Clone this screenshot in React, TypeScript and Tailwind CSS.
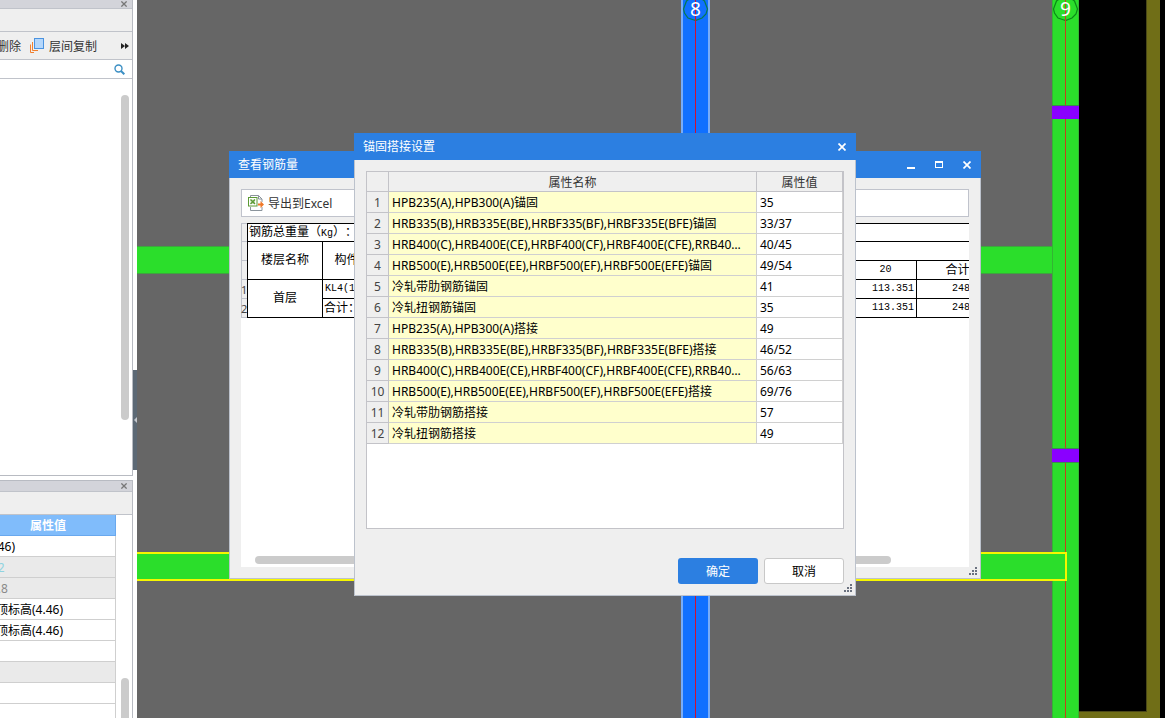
import React from "react";

const ui = "font-['Noto_Sans','Noto_Sans_CJK_SC',sans-serif]";

const anchorage = [
  ["HPB235(A),HPB300(A)锚固", "35"],
  ["HRB335(B),HRB335E(BE),HRBF335(BF),HRBF335E(BFE)锚固", "33/37"],
  ["HRB400(C),HRB400E(CE),HRBF400(CF),HRBF400E(CFE),RRB400(D)锚固", "40/45"],
  ["HRB500(E),HRB500E(EE),HRBF500(EF),HRBF500E(EFE)锚固", "49/54"],
  ["冷轧带肋钢筋锚固", "41"],
  ["冷轧扭钢筋锚固", "35"],
  ["HPB235(A),HPB300(A)搭接", "49"],
  ["HRB335(B),HRB335E(BE),HRBF335(BF),HRBF335E(BFE)搭接", "46/52"],
  ["HRB400(C),HRB400E(CE),HRBF400(CF),HRBF400E(CFE),RRB400(D)搭接", "56/63"],
  ["HRB500(E),HRB500E(EE),HRBF500(EF),HRBF500E(EFE)搭接", "69/76"],
  ["冷轧带肋钢筋搭接", "57"],
  ["冷轧扭钢筋搭接", "49"],
];

const properties = [
  { value: "(4.46)", cls: "bg-white text-black" },
  { value: "222", cls: "bg-[#eaeaea] text-[#8fd3e0]" },
  { value: "22.8", cls: "bg-[#eaeaea] text-[#8a8a8a]" },
  { value: "层顶标高(4.46)", cls: "bg-white text-black" },
  { value: "层顶标高(4.46)", cls: "bg-white text-black" },
  { value: "", cls: "bg-white" },
  { value: "", cls: "bg-[#eaeaea]" },
  { value: "", cls: "bg-white" },
  { value: "", cls: "bg-white" },
];

function Cross({ className }: { className: string }) {
  return (
    <svg className={className} viewBox="0 0 8 8" fill="none" stroke="currentColor" strokeWidth="1.7" aria-hidden="true">
      <path d="M0.5 0.5 7.5 7.5M7.5 0.5 0.5 7.5" />
    </svg>
  );
}

function Grip() {
  return (
    <svg className="absolute right-[3px] bottom-[3px] size-2" viewBox="0 0 8 8" fill="#6b7280" shapeRendering="crispEdges" aria-hidden="true">
      <path d="M6 0h2v2h-2zM3 3h2v2h-2zM6 3h2v2h-2zM0 6h2v2h-2zM3 6h2v2h-2zM6 6h2v2h-2z" />
    </svg>
  );
}

function PanelStrip() {
  return (
    <div className="flex h-full items-center justify-end bg-[#d3d4da] pr-[5px]">
      <button type="button" aria-label="关闭面板" className="text-[#777]">
        <Cross className="block size-[6px]" />
      </button>
    </div>
  );
}

function SidePanels() {
  return (
    <aside className="flex h-full w-[133px] shrink-0 flex-col overflow-hidden bg-white">
      <section className="flex h-[476px] shrink-0 flex-col border-r border-b border-[#b8bbc2] bg-white">
        <div className="h-[9px] border-b border-[#c0c3ca]"><PanelStrip /></div>
        <div className="h-[23px] border-b border-[#c0c3ca] bg-[#efefef]" />
        <div className="flex h-[28px] items-center border-b border-[#c0c3ca] bg-[#efefef] text-[#333]">
          <button type="button" className="-ml-[3px] shrink-0 pt-[2px] whitespace-nowrap">删除</button>
          <button type="button" className="ml-[9px] flex shrink-0 items-center gap-[5px] whitespace-nowrap">
            <svg className="h-[16px] w-[14px] shrink-0" viewBox="0 0 14 16" fill="none" aria-hidden="true">
              <path d="M.5 6.500V14.500H4" stroke="#f08030" />
              <path d="M2.500 4V12.500H8" stroke="#f08030" />
              <rect x="4.500" y=".5" width="9" height="10" fill="#b5d7fb" stroke="#4b93e0" />
            </svg>
            <span className="pt-[2px]">层间复制</span>
          </button>
          <button type="button" aria-label="更多" className="mr-[3px] ml-auto">
            <svg className="h-[6px] w-[8px]" viewBox="0 0 8 6" fill="#222" aria-hidden="true">
              <path d="M0 0 4 3 0 6ZM4 0 8 3 4 6Z" />
            </svg>
          </button>
        </div>
        <label className="flex h-[19px] items-center border-b border-[#c0c3ca] bg-white pr-[7px]">
          <input type="text" aria-label="搜索构件" className="min-w-0 flex-1 outline-none" />
          <svg className="size-[11px]" viewBox="0 0 11 11" fill="none" stroke="#3b8fc4" aria-hidden="true">
            <circle cx="4.5" cy="4.5" r="3.5" strokeWidth="1.4" />
            <path d="M7 7 10.3 10.3" strokeWidth="2" />
          </svg>
        </label>
        <div className="flex flex-1 justify-end pt-4 pr-[3px]">
          <div className="h-[325px] w-2 rounded-full bg-[#cbcbcb]" />
        </div>
      </section>
      <section className="mt-1 flex flex-1 flex-col border-t border-r border-[#b8bbc2]">
        <div className="h-[11px] shrink-0 border-b border-[#c0c3ca]"><PanelStrip /></div>
        <div className="h-[23px] shrink-0 border-b border-[#c0c3ca] bg-[#efefef]" />
        <div className="flex flex-1">
          <table className="-ml-[19px] w-[135px] table-fixed border-separate border-spacing-0 self-start">
            <thead>
              <tr>
                <th className="h-[21px] border-r border-b border-[#69a8ee] bg-[#80bcfb] px-0 pt-[2px] pb-0 font-bold text-white">属性值</th>
              </tr>
            </thead>
            <tbody>
              {properties.map((p, i) => (
                <tr key={i}>
                  <td className={`h-[21px] border-r border-b border-[#cfcfcf] pt-[2px] pr-0 pb-0 pl-[3px] whitespace-nowrap ${p.cls}`}>{p.value}</td>
                </tr>
              ))}
            </tbody>
          </table>
          <div className="mt-[163px] ml-[5px] w-2 rounded-t-full bg-[#cbcbcb]" />
        </div>
      </section>
    </aside>
  );
}

function Drawing() {
  return (
    <svg className="absolute inset-0 h-full w-full" shapeRendering="crispEdges" role="img" aria-label="结构平面图">
      <rect width="100%" height="100%" fill="#666666" />
      <rect x="942" y="0" width="100%" height="100%" fill="#000000" />
      <rect x="1009" y="0" width="14" height="100%" fill="#706e17" />
      <rect x="942" y="711" width="81" height="7" fill="#706e17" />
      <path d="M942 711.5h67.500V0" fill="none" stroke="#4a4818" />
      <rect x="0" y="247" width="915" height="27" fill="#2bde2b" />
      <path d="M0 246.500h915M0 273.500h915" stroke="#3fa53f" />
      <rect x="544" y="0" width="29" height="100%" fill="#79adf8" />
      <rect x="546" y="0" width="25" height="100%" fill="#1070ff" />
      <rect x="915" y="0" width="27" height="100%" fill="#2bde2b" />
      <path d="M915.500 0V718M941.500 0V718" stroke="#33b433" />
      <rect x="-2" y="553" width="931" height="27" fill="#2bde2b" stroke="#f6f600" strokeWidth="2" />
      <g shapeRendering="auto" strokeWidth="1.200">
        <path d="M558.500 20.500 551 18 547.500 13 546.500 9 549.500 1 555 -3H562L567.500 1 570.500 9 569 14 565 18Z" fill="#1070ff" stroke="#087a50" />
        <path d="M928.500 20.500 921 18 917.500 13 916.500 9 919.500 1 925 -3H932L937.500 1 940.500 9 939 14 935 18Z" fill="#2bde2b" stroke="#0b8a18" />
      </g>
      <rect x="558" y="0" width="1" height="100%" fill="#d01030" />
      <rect x="928" y="0" width="1" height="100%" fill="#c8401c" />
      <rect x="915" y="105" width="27" height="14" fill="#8a00ff" />
      <rect x="915" y="449" width="27" height="13" fill="#8a00ff" />
      <path d="M915 105.500h27M915 448.500h27M915 462.500h27" stroke="#3c8a50" />
      <path d="M929 552v29" stroke="#f6f600" strokeWidth="2" />
      <g fill="#ffffff" fontSize="19" textAnchor="middle" className="font-['Noto_Sans',sans-serif]">
        <text x="558.500" y="16">8</text>
        <text x="928.500" y="16">9</text>
      </g>
    </svg>
  );
}

const cell = "border border-black p-0";
const num = "font-['Liberation_Mono',monospace] text-[10px]";

function RebarWindow() {
  return (
    <section aria-label="查看钢筋量" className="absolute top-[151px] left-[92px] flex h-[428px] w-[752px] flex-col border border-t-0 border-[#bcc2cc] bg-[#efefef]">
      <header className="-mx-px flex h-[27px] shrink-0 items-center bg-[#2c7fe1] pr-[10px] pl-[9px] text-white">
        <h2>查看钢筋量</h2>
        <div className="ml-auto flex items-center gap-5">
          <button type="button" aria-label="最小化" className="flex h-2 w-2 items-end">
            <span className="h-[2px] w-2 bg-white" />
          </button>
          <button type="button" aria-label="最大化" className="h-[7px] w-2 border border-t-2 border-white" />
          <button type="button" aria-label="关闭"><Cross className="block size-2" /></button>
        </div>
      </header>
      <div className="flex flex-1 flex-col px-[11px] pt-[11px] pb-[11px]">
        <div className="flex h-[28px] shrink-0 items-center border border-[#c0c3cc] bg-white pl-[6px]">
          <button type="button" className="flex items-center gap-1 text-[#333]">
            <svg className="size-4" viewBox="0 0 16 16" fill="none" aria-hidden="true">
              <path d="M2.500 2V.5h8L14 4v3M14 12v3.500H2.500V12" stroke="#8b949c" />
              <path d="M10.500 .5V4H14" stroke="#8b949c" />
              <rect x=".5" y="2.500" width="8.500" height="8.500" fill="#fff" stroke="#5c9a35" />
              <rect x="2.500" y="4.500" width="4.500" height="4.500" fill="#cfe3c0" />
              <path d="M2.500 4.500 7 9M7 4.500 2.500 9" stroke="#5c9a35" strokeWidth="1.400" />
              <path d="M10 8.500h2.500V6L16 9.500 12.500 13v-2.500H10Z" fill="#f07828" />
            </svg>
            <span className="pt-[2px]">导出到Excel</span>
          </button>
        </div>
        <div className="mt-[6px] flex min-h-0 flex-1 flex-col overflow-hidden bg-white font-['Liberation_Serif','Noto_Sans_CJK_SC',serif] text-black">
          <div className="flex">
            <div className="grid h-[95px] w-[6px] shrink-0 grid-rows-[18px_19px_19px_19px_19px] border-t border-l border-[#c0c3cc] bg-[#efefef] text-[11px] text-[#444] font-['Noto_Sans',sans-serif]">
              <span className="border-b border-[#c0c3cc]" />
              <span className="border-b border-[#c0c3cc]" />
              <span className="border-b border-[#c0c3cc]" />
              <span className="-ml-px border-b border-[#c0c3cc] leading-[19px]">1</span>
              <span className="-ml-px border-b border-[#c0c3cc] leading-[19px]">2</span>
            </div>
            <table className="w-[752px] shrink-0 table-fixed border-collapse">
              <colgroup>
                <col className="w-[75px]" />
                <col className="w-[72px]" />
                <col />
                <col className="w-[62px]" />
                <col className="w-[82px]" />
              </colgroup>
              <tbody>
                <tr className="h-[18px]">
                  <td colSpan={5} className={`${cell} pl-px text-left leading-[14px] [text-spacing-trim:space-all]`}>钢筋总重量（<span className={num}>Kg</span>）：</td>
                </tr>
                <tr className="h-[19px]">
                  <th rowSpan={2} className={`${cell} pb-[2px] font-normal`}>楼层名称</th>
                  <th rowSpan={2} className={`${cell} pb-[2px] font-normal`}>构件名称</th>
                  <td colSpan={3} className={cell} />
                </tr>
                <tr className="h-[19px] leading-[16px]">
                  <td className={cell} />
                  <th className={`${cell} font-normal ${num}`}>20</th>
                  <th className={`${cell} font-normal`}>合计</th>
                </tr>
                <tr className="h-[19px] leading-[16px]">
                  <th rowSpan={2} className={`${cell} pb-[2px] font-normal`}>首层</th>
                  <td className={`${cell} pl-[2px] ${num}`}>KL4(1)</td>
                  <td className={cell} />
                  <td className={`${cell} pr-[2px] text-right ${num}`}>113.351</td>
                  <td className={`${cell} pl-[35px] ${num}`}>248</td>
                </tr>
                <tr className="h-[19px] leading-[16px]">
                  <td className={`${cell} pl-px`}>合计：</td>
                  <td className={cell} />
                  <td className={`${cell} pr-[2px] text-right ${num}`}>113.351</td>
                  <td className={`${cell} pl-[35px] ${num}`}>248</td>
                </tr>
              </tbody>
            </table>
          </div>
          <div className="mt-auto mr-[78px] mb-[3px] ml-[14px] h-2 rounded-full bg-[#cbcbcb]" />
        </div>
      </div>
      <Grip />
    </section>
  );
}

function AnchorageDialog() {
  return (
    <section role="dialog" aria-label="锚固搭接设置" className="absolute top-[133px] left-[217px] flex h-[463px] w-[502px] flex-col border border-t-0 border-[#bcc2cc] bg-[#efefef]">
      <header className="-mx-px flex h-[27px] shrink-0 items-center justify-between bg-[#2c7fe1] pr-[10px] pl-[9px] text-white">
        <h2>锚固搭接设置</h2>
        <button type="button" aria-label="关闭"><Cross className="block size-2" /></button>
      </header>
      <div className="flex flex-1 flex-col px-[11px] pt-[11px] pb-[11px]">
        <div className="h-[358px] shrink-0 border border-[#c3c3c8] bg-white">
          <table className="w-full table-fixed border-separate border-spacing-0">
            <colgroup>
              <col className="w-[22px]" />
              <col />
              <col className="w-[86px]" />
            </colgroup>
            <thead>
              <tr className="h-[20px] bg-[#efefef] text-[#333]">
                <th className="border-r border-b border-[#c3c3c8] p-0" />
                <th className="border-r border-b border-[#c3c3c8] px-0 pt-[2px] pb-0 font-normal">属性名称</th>
                <th className="border-r border-b border-[#c3c3c8] px-0 pt-[2px] pb-0 font-normal">属性值</th>
              </tr>
            </thead>
            <tbody>
              {anchorage.map(([name, value], i) => (
                <tr key={name} className="h-[21px]">
                  <th className="border-r border-b border-[#c3c3c8] bg-[#efefef] px-0 pt-[2px] pb-0 font-normal text-[#444]">{i + 1}</th>
                  <td className="truncate border-r border-b border-[#d0d0d0] bg-[#ffffcc] pt-[2px] pr-3 pb-0 pl-[3px]">{name}</td>
                  <td className="border-r border-b border-[#d0d0d0] pt-[2px] pr-0 pb-0 pl-[3px]">{value}</td>
                </tr>
              ))}
            </tbody>
          </table>
        </div>
        <div className="mt-auto flex justify-end gap-[6px]">
          <button type="button" className="h-[26px] w-20 rounded-[3px] bg-[#2c7fe1] pt-[2px] text-white">确定</button>
          <button type="button" className="h-[26px] w-20 rounded-[3px] border border-[#c8c8c8] bg-white pt-[2px] text-black">取消</button>
        </div>
      </div>
      <Grip />
    </section>
  );
}

export default function App() {
  return (
    <div className={`flex h-screen overflow-hidden bg-white text-[12px] leading-[16px] text-black ${ui}`}>
      <SidePanels />
      <div className="flex w-1 shrink-0 flex-col pt-[370px]">
        <button type="button" aria-label="折叠面板" className="flex h-[100px] items-center justify-end bg-[#5c6975]">
          <svg className="h-[6px] w-[3px]" viewBox="0 0 3 6" fill="#c3c8ce" aria-hidden="true">
            <path d="M3 0V6L0 3Z" />
          </svg>
        </button>
      </div>
      <main className="relative flex-1 overflow-hidden">
        <Drawing />
        <RebarWindow />
        <AnchorageDialog />
      </main>
    </div>
  );
}
